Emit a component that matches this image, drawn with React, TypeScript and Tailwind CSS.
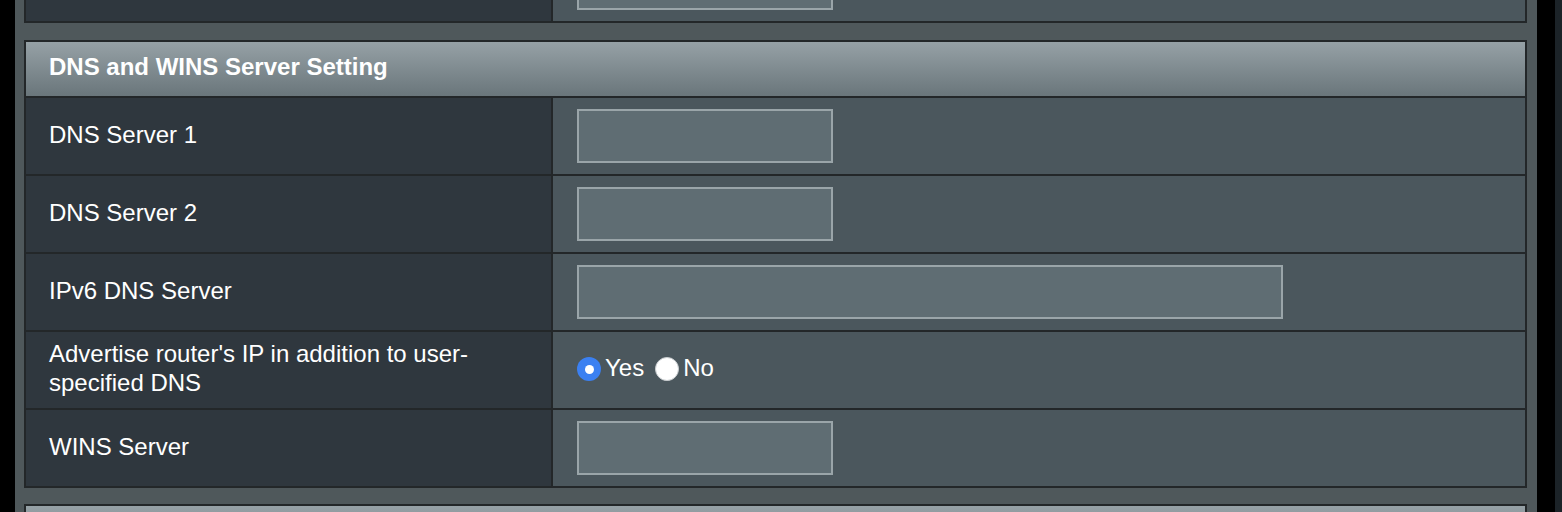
const font = { fontFamily: '"Liberation Sans", Arial, sans-serif' };

type Row = { label: string; kind: "short" | "long" | "radio" };

const rows: Row[] = [
  { label: "DNS Server 1", kind: "short" },
  { label: "DNS Server 2", kind: "short" },
  { label: "IPv6 DNS Server", kind: "long" },
  { label: "Advertise router's IP in addition to user-specified DNS", kind: "radio" },
  { label: "WINS Server", kind: "short" },
];

const TextBox = ({ wide }: { wide?: boolean }) => (
  <div
    className={`h-[54px] border-2 border-[#9aa5a9] bg-[#5f6d73] ${wide ? "w-[706px]" : "w-[256px]"}`}
  />
);

const Radio = ({ checked, label }: { checked?: boolean; label: string }) => (
  <label className="flex items-center gap-[4px]">
    {checked ? (
      <span className="grid h-[24px] w-[24px] place-items-center rounded-full bg-[#3b80f1]">
        <span className="h-[9px] w-[9px] rounded-full bg-white" />
      </span>
    ) : (
      <span className="h-[24px] w-[24px] rounded-full border border-[#c9cdd0] bg-white" />
    )}
    <span className="-mt-[2px]">{label}</span>
  </label>
);

const Header = ({ title }: { title: string }) => (
  <div className="flex h-[54px] items-center bg-gradient-to-b from-[#96a1a6] to-[#6a767b] px-[23px] pb-[4px] text-[24px] font-bold text-white">
    {title}
  </div>
);

export default function App() {
  return (
    <div className="flex h-[512px] w-[1562px] overflow-hidden bg-black text-white" style={font}>
      <div className="w-[15px] shrink-0 bg-black" />
      <div className="flex w-[1522px] shrink-0 flex-col bg-[#4f585b] pl-[9px] pr-[10px]">
        {/* previous table, only its last row shows */}
        <div className="-mt-[57px] border-2 border-[#232729]">
          <div className="flex h-[76px]">
            <div className="w-[527px] shrink-0 border-r-2 border-[#232729] bg-[#2f373e]" />
            <div className="flex flex-1 items-center bg-[#4b575d] pl-[24px]">
              <TextBox />
            </div>
          </div>
        </div>

        <div className="mt-[17px] shrink-0 border-2 border-[#232729]">
          <Header title="DNS and WINS Server Setting" />
          {rows.map((row) => (
            <div key={row.label} className="flex h-[78px] border-t-2 border-[#232729]">
              <div className="flex w-[527px] shrink-0 items-center border-r-2 border-[#232729] bg-[#2f373e] pb-[4px] pl-[23px] pr-[52px] text-[24px] leading-[29px]">
                {row.label}
              </div>
              <div className="flex flex-1 items-center bg-[#4b575d] pl-[24px] text-[24px]">
                {row.kind === "radio" ? (
                  <div className="-mt-[2px] flex items-center gap-[11px]">
                    <Radio checked label="Yes" />
                    <Radio label="No" />
                  </div>
                ) : (
                  <TextBox wide={row.kind === "long"} />
                )}
              </div>
            </div>
          ))}
        </div>

        <div className="mt-[16px] shrink-0 border-2 border-[#232729]">
          <Header title="" />
        </div>
      </div>
      <div className="w-[18px] shrink-0 bg-black" />
      <div className="w-[7px] shrink-0 bg-[#1c2328]" />
    </div>
  );
}
